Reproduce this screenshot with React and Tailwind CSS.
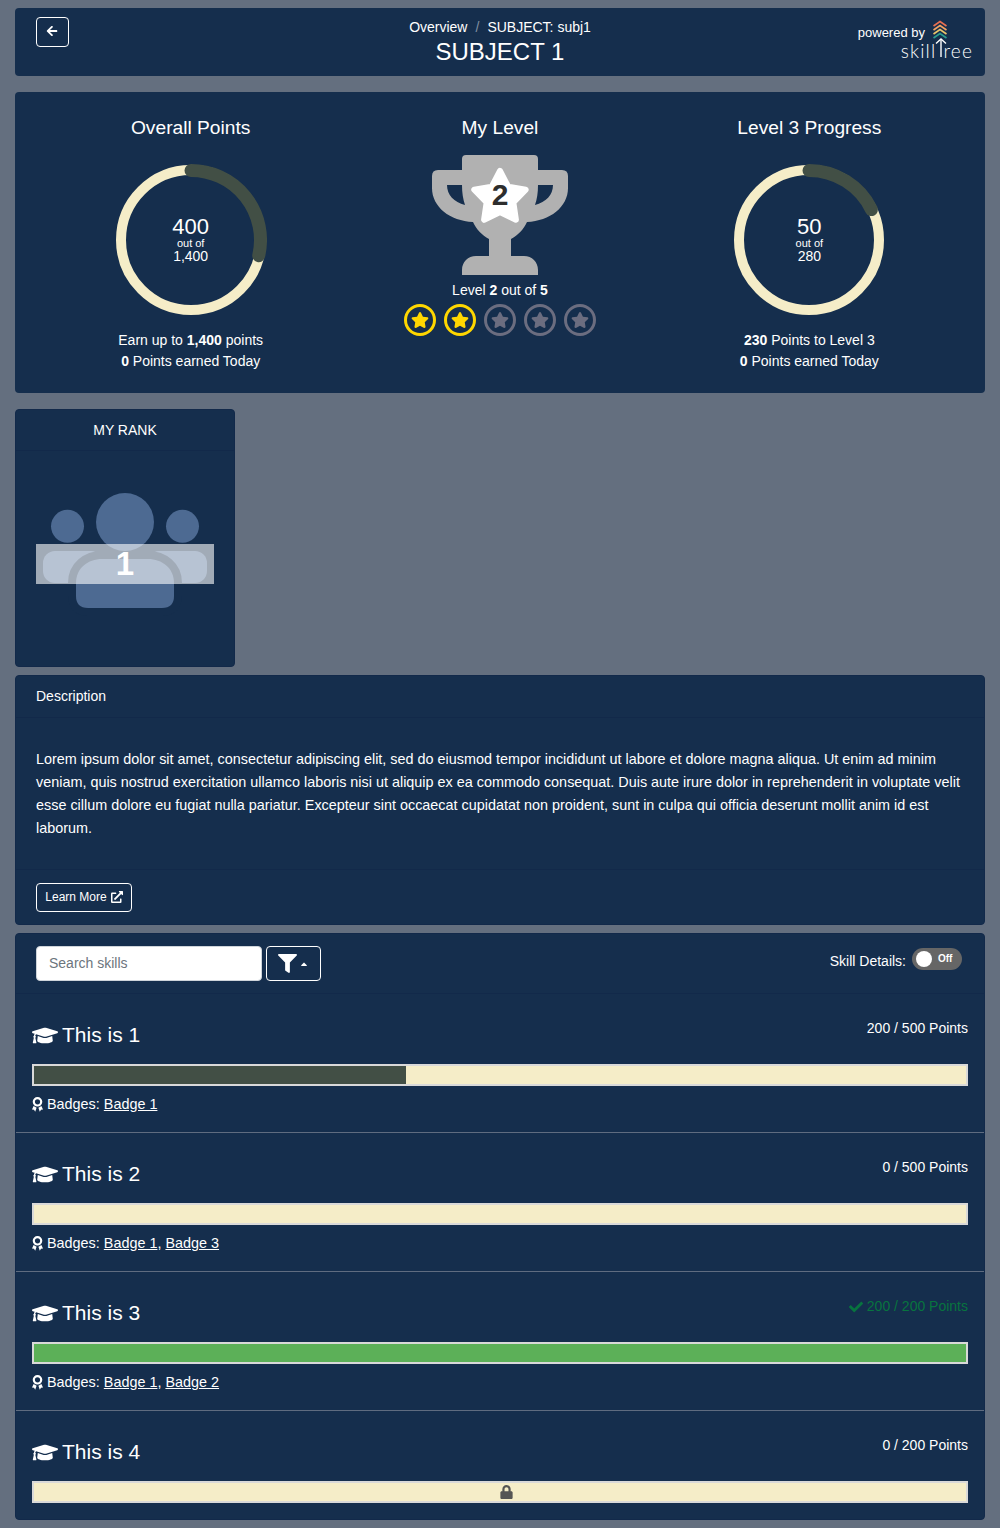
import React from "react";
import {
  FaArrowLeft,
  FaCaretUp,
  FaCheck,
  FaExternalLinkAlt,
  FaFilter,
  FaGraduationCap,
  FaLock,
  FaStar,
} from "react-icons/fa";

const Ring = ({ value, label, total, degrees }) => {
  const r = 69.5;
  const angle = ((degrees - 90) * Math.PI) / 180;
  const endX = 76 + r * Math.cos(angle);
  const endY = 76 + r * Math.sin(angle);
  return (
    <div className="relative w-[152px] h-[152px]">
      <svg width="152" height="152" viewBox="0 0 152 152">
        <circle cx="76" cy="76" r="70" fill="none" stroke="#f5edc8" strokeWidth="10" />
        <path
          d={`M76 6.5 A${r} ${r} 0 0 1 ${endX} ${endY}`}
          fill="none"
          stroke="#424f45"
          strokeWidth="13"
          strokeLinecap="round"
        />
      </svg>
      <div className="absolute inset-0 flex flex-col items-center justify-center text-white">
        <span className="text-[22px] leading-[22px]">{value}</span>
        <span className="text-[11px] leading-[10px]">{label}</span>
        <span className="text-[14px] leading-[17px]">{total}</span>
      </div>
    </div>
  );
};

const LevelStar = ({ on }) => (
  <div
    className={`w-8 h-8 rounded-full border-[3px] flex items-center justify-center ${
      on ? "border-[#ffd700] text-[#ffd700]" : "border-[#6b6d80] text-[#6b6d80]"
    }`}
  >
    <FaStar className="w-[18px] h-[18px]" />
  </div>
);

const BadgeIcon = () => (
  <svg width="11" height="15" viewBox="0 0 11 15" fill="white" className="shrink-0">
    <circle cx="5.5" cy="4.8" r="3.7" fill="none" stroke="white" strokeWidth="2.2" />
    <path d="M0 12.4 L1.6 9 L4.6 10.8 L3.2 14.8 L2 12.8Z" />
    <path d="M11 12.4 L9.4 9 L6.4 10.8 L7.8 14.8 L9 12.8Z" />
  </svg>
);

const TrophyIcon = () => (
  <svg width="136" height="120" viewBox="0 0 136 120">
    <path
      fill="#b1b1b1"
      fillRule="evenodd"
      d="M34 0H102Q106 0 106 4V15H130Q136 15 136 21V33C136 52 118 66 95 67C92 74 86 80 79 84V101H92C100 101 106 107 106 115V120H30V115C30 107 36 101 44 101H57V84C50 80 44 74 41 67C18 66 0 52 0 33V21Q0 15 6 15H30V4Q30 0 34 0ZM15 30H30C30 38 31 44 33 50C22 47 15 40 15 30ZM121 30H106C106 38 105 44 103 50C114 47 121 40 121 30Z"
    />
    <polygon
      fill="white"
      stroke="white"
      strokeWidth="6"
      strokeLinejoin="round"
      points="68,16 76.2,31.7 93.7,34.7 81.3,47.3 83.9,64.8 68,57 52.1,64.8 54.7,47.3 42.3,34.7 59.8,31.7"
    />
  </svg>
);

const RankIcon = () => (
  <svg width="178" height="216" viewBox="36 451 178 216">
    <rect x="43" y="551" width="60" height="32" rx="12" fill="#4d6a92" />
    <rect x="147" y="551" width="60" height="32" rx="12" fill="#4d6a92" />
    <path
      d="M76 583C76 568 88 559 102 559H148C162 559 174 568 174 583V596Q174 608 162 608H88Q76 608 76 596Z"
      fill="#4d6a92"
      stroke="#152e4d"
      strokeWidth="16"
      paintOrder="stroke"
    />
    <circle cx="67.5" cy="526.3" r="16.5" fill="#4d6a92" />
    <circle cx="182.5" cy="526.3" r="16.5" fill="#4d6a92" />
    <circle cx="125" cy="522" r="29" fill="#4d6a92" />
  </svg>
);

const Logo = () => (
  <div className="flex flex-col items-end text-white">
    <div className="flex items-start h-[18px] mr-[24px]">
      <span className="text-[13px] leading-[15px] mt-[5px] mr-[7px]">powered by</span>
      <svg width="16" height="20" viewBox="0 0 16 20" fill="none" strokeWidth="1.7">
        <path d="M1.5 6 L8 1.5 L14.5 6" stroke="#e76f51" />
        <path d="M1.5 10 L8 5.5 L14.5 10" stroke="#f4a261" />
        <path d="M1.5 14 L8 9.5 L14.5 14" stroke="#e9c46a" />
        <path d="M1.5 18 L8 13.5 L14.5 18" stroke="#2a9d8f" />
      </svg>
    </div>
    <div className="flex items-end -mr-[1px] font-['Lato',sans-serif] font-light text-[19px] leading-[20px] tracking-[1.2px]">
      <span className="-mb-[3px]">skill</span>
      <svg width="12" height="20" viewBox="0 0 12 20" fill="none" stroke="white" strokeWidth="1.4" className="-ml-[1px]">
        <path d="M1 5.5 L6 1 L11 5.5" />
        <path d="M6 1.5 V19" />
      </svg>
      <span className="-ml-1 -mb-[3px]">ree</span>
    </div>
  </div>
);

const Row = ({ title, points, pct, color, done, locked, badges, last }) => (
  <div className={`px-4 pt-6 ${last ? "pb-4" : "pb-[17px] border-b border-[#5f6c80]"}`}>
    <div className="flex justify-between items-start h-[34px] mb-3">
      <div className="flex items-center gap-1 h-[34px] text-[21px] text-white">
        <FaGraduationCap className="w-[26px] h-[21px]" />
        <span>{title}</span>
      </div>
      <div className={`flex items-center gap-1 text-[14px] leading-[21px] ${done ? "text-[#08743f]" : "text-white"}`}>
        {done && <FaCheck className="w-[14px] h-[14px]" />}
        <span>{points}</span>
      </div>
    </div>
    <div className="relative h-[22px] border-2 border-[#d9d9d9] bg-[#f5edc8]">
      <div className="h-full" style={{ width: `${pct}%`, backgroundColor: color }} />
      {locked && (
        <div className="absolute inset-0 flex items-center justify-center pl-3 text-[#555]">
          <FaLock className="w-[13px] h-[14px]" />
        </div>
      )}
    </div>
    {badges && (
      <div className="flex items-center gap-1 mt-2 text-[14.4px] leading-[21px] text-white">
        <BadgeIcon />
        <span>
          Badges:{" "}
          {badges.map((b, i) => (
            <span key={b}>
              {i > 0 && ", "}
              <span className="underline">{b}</span>
            </span>
          ))}
        </span>
      </div>
    )}
  </div>
);

const App = () => {
  return (
    <div className="min-h-[1528px] bg-[#646f7f] px-[15px] pt-2 pb-2 font-['Liberation_Sans',sans-serif] text-white text-[14px]">
      {/* Header */}
      <div className="grid grid-cols-[1fr_auto_1fr] h-[68px] bg-[#152e4d] rounded px-[13px]">
        <div className="pt-[9px] pl-2">
          <button className="w-[33px] h-[30px] border border-white rounded flex items-center justify-center pb-[2px] pr-[2px]">
            <FaArrowLeft className="w-3 h-3" />
          </button>
        </div>
        <div className="flex flex-col items-center pt-[9px]">
          <div className="flex gap-2 leading-[21px]">
            <span>Overview</span>
            <span className="text-[#8190a3]">/</span>
            <span>SUBJECT: subj1</span>
          </div>
          <div className="text-[24px] leading-[29px] -mt-[1px]">SUBJECT 1</div>
        </div>
        <div className="flex justify-end pt-[12px]">
          <Logo />
        </div>
      </div>

      {/* Overview */}
      <div className="grid grid-cols-3 h-[301px] mt-4 bg-[#152e4d] rounded px-[21px] pt-[21px]">
        <div className="flex flex-col items-center">
          <div className="text-[19.2px] leading-[29px]">Overall Points</div>
          <div className="mt-[22px]">
            <Ring value="400" label="out of" total="1,400" degrees={103} />
          </div>
          <div className="mt-[14px] leading-[21px] text-center">
            <div>
              Earn up to <b>1,400</b> points
            </div>
            <div>
              <b>0</b> Points earned Today
            </div>
          </div>
        </div>
        <div className="flex flex-col items-center">
          <div className="text-[19.2px] leading-[29px]">My Level</div>
          <div className="relative mt-[13px]">
            <TrophyIcon />
            <span className="absolute inset-x-0 top-[22px] text-center text-[30px] leading-[36px] font-bold text-[#2d2d2d]">
              2
            </span>
          </div>
          <div className="mt-[5px] leading-[21px]">
            Level <b>2</b> out of <b>5</b>
          </div>
          <div className="flex gap-2 mt-[3px]">
            <LevelStar on />
            <LevelStar on />
            <LevelStar />
            <LevelStar />
            <LevelStar />
          </div>
        </div>
        <div className="flex flex-col items-center">
          <div className="text-[19.2px] leading-[29px]">Level 3 Progress</div>
          <div className="mt-[22px]">
            <Ring value="50" label="out of" total="280" degrees={64} />
          </div>
          <div className="mt-[14px] leading-[21px] text-center">
            <div>
              <b>230</b> Points to Level 3
            </div>
            <div>
              <b>0</b> Points earned Today
            </div>
          </div>
        </div>
      </div>

      {/* Rank */}
      <div className="w-[220px] h-[258px] mt-4 bg-[#152e4d] rounded border border-[#12294a]">
        <div className="h-[41px] flex items-center justify-center border-b border-[#12294a]">MY RANK</div>
        <div className="relative flex justify-center">
          <RankIcon />
          <div className="absolute left-[20px] right-[20px] top-[93px] h-10 bg-white/60 flex items-center justify-center text-[33px] font-bold">
            1
          </div>
        </div>
      </div>

      {/* Description */}
      <div className="h-[250px] mt-2 bg-[#152e4d] rounded border border-[#12294a]">
        <div className="h-[42px] flex items-center px-5 border-b border-[#12294a]">Description</div>
        <div className="h-[152px] px-5 pt-[30px] text-[14.4px] leading-[23px] border-b border-[#12294a]">
          Lorem ipsum dolor sit amet, consectetur adipiscing elit, sed do eiusmod tempor incididunt ut labore et dolore
          magna aliqua. Ut enim ad minim veniam, quis nostrud exercitation ullamco laboris nisi ut aliquip ex ea commodo
          consequat. Duis aute irure dolor in reprehenderit in voluptate velit esse cillum dolore eu fugiat nulla
          pariatur. Excepteur sint occaecat cupidatat non proident, sunt in culpa qui officia deserunt mollit anim id est
          laborum.
        </div>
        <div className="px-5 pt-[13px]">
          <button className="w-[96px] h-[29px] pb-[2px] border border-white rounded flex items-center justify-center gap-1 text-[12px]">
            Learn More <FaExternalLinkAlt className="w-3 h-3" />
          </button>
        </div>
      </div>

      {/* Skills */}
      <div className="mt-2 bg-[#152e4d] rounded border border-[#12294a]">
        <div className="h-[60px] flex justify-between border-b border-[#12294a] pl-5 pr-[22px] pt-3">
          <div className="flex gap-1 items-start">
            <input
              placeholder="Search skills"
              className="w-[226px] h-[35px] bg-white rounded pl-3 pb-[2px] text-[14px] text-[#495057] border border-[#ced4da] placeholder:text-[#6c757d]"
            />
            <button className="w-[55px] h-[35px] border border-white rounded flex items-center justify-center gap-[2px]">
              <FaFilter className="w-[19px] h-[19px]" />
              <FaCaretUp className="w-[10px] h-[10px]" />
            </button>
          </div>
          <div className="flex items-start gap-[6px] pt-[2px]">
            <span className="leading-[21px] mt-[3px]">Skill Details:</span>
            <div className="w-[50px] h-[22px] rounded-full bg-[#666] flex items-center pl-1 gap-[6px]">
              <div className="w-4 h-4 rounded-full bg-white" />
              <span className="text-[10px] font-bold -mt-[2px]">Off</span>
            </div>
          </div>
        </div>
        <Row title="This is 1" points="200 / 500 Points" pct={39.9} color="#424f45" badges={["Badge 1"]} />
        <Row title="This is 2" points="0 / 500 Points" pct={0} badges={["Badge 1", "Badge 3"]} />
        <Row title="This is 3" points="200 / 200 Points" pct={100} color="#5cb058" done badges={["Badge 1", "Badge 2"]} />
        <Row title="This is 4" points="0 / 200 Points" pct={0} locked last />
      </div>
    </div>
  );
};

export default App;
